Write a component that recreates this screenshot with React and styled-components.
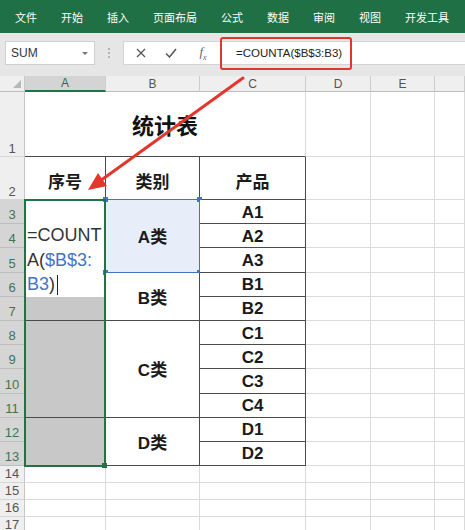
import styled, { createGlobalStyle } from 'styled-components';

const GlobalStyle = createGlobalStyle`
  html, body {
    margin: 0;
    padding: 0;
    background: #fff;
  }
  body {
    font-family: "Liberation Sans", "Noto Sans CJK SC", sans-serif;
  }
  * { box-sizing: border-box; }
`;

const DARK = '#4a4a4a';
const LIGHT = '#dadada';
const GREEN = '#217346';
const BLUE = '#4472c4';

const place = ({ $r, $c, $rs = 1, $cs = 1 }) =>
  `grid-row: ${$r} / span ${$rs}; grid-column: ${$c} / span ${$cs};`;

const Page = styled.div`
  position: relative;
  width: 465px;
  height: 530px;
  overflow: hidden;
  display: flex;
  flex-direction: column;
`;

const Ribbon = styled.div`
  height: 33px;
  flex-shrink: 0;
  background: #1f7145;
  display: flex;
  align-items: center;
  gap: 24px;
  padding-left: 15px;
  color: #fff;
  font-size: 11px;
  font-family: "Noto Sans CJK SC", sans-serif;
  white-space: nowrap;
`;

const Toolbar = styled.div`
  height: 43px;
  flex-shrink: 0;
  background: #e6e6e6;
  display: flex;
  align-items: flex-start;
  padding-top: 8px;
`;

const NameBox = styled.div`
  margin-left: 5px;
  width: 90px;
  height: 24px;
  background: #fff;
  border: 1px solid #cfcfcf;
  display: flex;
  align-items: center;
  justify-content: space-between;
  padding: 0 6px 0 5px;
  font-size: 12px;
  color: #333;
`;

const DropArrow = styled.span`
  width: 0;
  height: 0;
  border-left: 3px solid transparent;
  border-right: 3px solid transparent;
  border-top: 3px solid #777;
`;

const Grip = styled.div`
  width: 28px;
  height: 24px;
  display: flex;
  flex-direction: column;
  align-items: center;
  justify-content: center;
  gap: 2px;
  span {
    width: 2px;
    height: 2px;
    background: #b4b4b4;
  }
`;

const FormulaBox = styled.div`
  flex: 1;
  height: 24px;
  background: #fff;
  border: 1px solid #d4d4d4;
  border-right: none;
  display: flex;
  align-items: center;
  padding-left: 1px;
`;

const IconSlot = styled.div`
  width: ${(p) => p.$w}px;
  height: 22px;
  display: flex;
  align-items: center;
  justify-content: center;
  color: #555;
`;

const Fx = styled.span`
  font-family: "Liberation Serif", serif;
  font-style: italic;
  font-size: 13px;
  color: #666;
  sub {
    font-size: 8px;
  }
`;

const Callout = styled.div`
  width: 132px;
  height: 33px;
  margin: -4px 0;
  border: 2px solid #e2352c;
  border-radius: 3px;
  display: flex;
  align-items: center;
  padding-left: 14px;
  font-size: 11.5px;
  color: #222;
  white-space: nowrap;
`;

const Sheet = styled.div`
  flex: 1;
  display: grid;
  grid-template-columns: 25px 81px 94px 106px 65px 64px 30px;
  grid-template-rows: 16px 65px 43px repeat(11, 24.2px) repeat(4, 17px);
`;

const Corner = styled.div`
  ${place};
  position: relative;
  background: #efefef;
  border-right: 1px solid #c9c9c9;
  border-bottom: 1px solid #bdbdbd;
  &::after {
    content: '';
    position: absolute;
    right: 3px;
    bottom: 3px;
    border-left: 8px solid transparent;
    border-bottom: 8px solid #b8b8b8;
  }
`;

const ColHead = styled.div`
  ${place};
  background: ${(p) => (p.$sel ? '#d4d4d4' : '#efefef')};
  color: ${(p) => (p.$sel ? GREEN : '#555')};
  border-right: 1px solid #cdcdcd;
  border-bottom: ${(p) => (p.$sel ? `2px solid ${GREEN}` : '1px solid #bdbdbd')};
  display: flex;
  align-items: center;
  justify-content: center;
  font-size: 12px;
`;

const RowHead = styled.div`
  ${place};
  background: ${(p) => (p.$sel ? '#d5d5d5' : '#efefef')};
  color: ${(p) => (p.$sel ? '#3d7553' : '#555')};
  border-right: 1px solid #c6c6c6;
  border-bottom: 1px solid ${(p) => (p.$sel ? '#bebebe' : '#d6d6d6')};
  display: flex;
  align-items: flex-end;
  justify-content: center;
  padding-bottom: ${(p) => (p.$tall ? 0 : 1)}px;
  font-size: 13px;
  line-height: 15px;
`;

const Blank = styled.div`
  ${place};
  border-right: 1px solid ${LIGHT};
  border-bottom: 1px solid ${LIGHT};
`;

const Title = styled.div`
  ${place};
  border-right: 1px solid ${LIGHT};
  border-bottom: 1px solid ${DARK};
  display: flex;
  align-items: center;
  justify-content: center;
  font-family: "Noto Sans CJK SC", sans-serif;
  font-weight: 700;
  font-size: 22px;
  color: #111;
`;

const TableCell = styled.div`
  ${place};
  position: relative;
  background: ${(p) => p.$bg || '#fff'};
  border-right: 1px solid ${DARK};
  border-bottom: 1px solid ${DARK};
  display: flex;
  align-items: center;
  justify-content: center;
  font-weight: 700;
  font-size: 17px;
  color: #1a1a1a;
  padding-top: ${(p) => p.$pt || 0}px;
`;

const RefCell = styled(TableCell)`
  background: #e7eef9;
  border: 1.5px solid ${BLUE};
  margin: -1px 0 0 -1px;
`;

const Handle = styled.span`
  position: absolute;
  width: 5px;
  height: 5px;
  background: ${(p) => p.$color};
  ${(p) => (p.$top ? 'top: -3px;' : 'bottom: -3px;')}
  ${(p) => (p.$left ? 'left: -3px;' : 'right: -3px;')}
`;

const EditCell = styled.div`
  ${place};
  background: #fff;
  display: flex;
  flex-direction: column;
  justify-content: flex-end;
  padding-left: 2px;
  font-size: 18px;
  line-height: 24.5px;
  color: #333;
`;

const Line = styled.div`
  display: flex;
  align-items: center;
  white-space: nowrap;
`;

const Ref = styled.span`
  color: ${BLUE};
`;

const Caret = styled.span`
  width: 1px;
  height: 20px;
  margin-left: 2px;
  background: #222;
`;

const Frame = styled.div`
  ${place};
  position: relative;
  border: 2px solid ${GREEN};
  margin: -1px 0 -1px -1px;
  pointer-events: none;
  z-index: 2;
`;

const Overlay = styled.svg`
  position: absolute;
  left: 0;
  top: 0;
  pointer-events: none;
  z-index: 5;
`;

const tabs = ['文件', '开始', '插入', '页面布局', '公式', '数据', '审阅', '视图', '开发工具'];
const cols = ['A', 'B', 'C', 'D', 'E', 'F'];
const products = ['A1', 'A2', 'A3', 'B1', 'B2', 'C1', 'C2', 'C3', 'C4', 'D1', 'D2'];
const LAST_ROW = 17;

const App = () => {
  const rowHeads = [];
  for (let n = 1; n <= LAST_ROW; n++) {
    rowHeads.push(
      <RowHead key={'r' + n} $r={n + 1} $c={1} $sel={n >= 3 && n <= 13} $tall={n <= 2}>
        {n}
      </RowHead>
    );
  }

  const blanks = [];
  for (let n = 1; n <= LAST_ROW; n++) {
    const from = n <= 13 ? 5 : 2;
    for (let c = from; c <= 7; c++) {
      blanks.push(<Blank key={`b${n}-${c}`} $r={n + 1} $c={c} />);
    }
  }

  return (
    <Page>
      <GlobalStyle />
      <Ribbon>
        {tabs.map((t) => (
          <span key={t}>{t}</span>
        ))}
      </Ribbon>
      <Toolbar>
        <NameBox>
          SUM
          <DropArrow />
        </NameBox>
        <Grip>
          <span />
          <span />
          <span />
        </Grip>
        <FormulaBox>
          <IconSlot $w={31}>
            <svg width="10" height="10" viewBox="0 0 10 10">
              <path d="M1 1L9 9M9 1L1 9" stroke="#555" strokeWidth="1.3" />
            </svg>
          </IconSlot>
          <IconSlot $w={30}>
            <svg width="12" height="10" viewBox="0 0 12 10">
              <path d="M1 5.5L4.5 9L11 1" stroke="#555" strokeWidth="1.5" fill="none" />
            </svg>
          </IconSlot>
          <IconSlot $w={34}>
            <Fx>
              f<sub>x</sub>
            </Fx>
          </IconSlot>
          <Callout>=COUNTA($B$3:B3)</Callout>
        </FormulaBox>
      </Toolbar>

      <Sheet>
        <Corner $r={1} $c={1} />
        {cols.map((c, i) => (
          <ColHead key={c} $r={1} $c={i + 2} $sel={c === 'A'}>
            {c === 'F' ? '' : c}
          </ColHead>
        ))}
        {rowHeads}
        {blanks}

        <Title $r={2} $c={2} $cs={3}>统计表</Title>

        <TableCell $r={3} $c={2} $pt={4}>序号</TableCell>
        <TableCell $r={3} $c={3} $pt={4}>类别</TableCell>
        <TableCell $r={3} $c={4} $pt={4}>产品</TableCell>

        <EditCell $r={4} $c={2} $rs={4}>
          <Line>=COUNT</Line>
          <Line>
            A(<Ref>$B$3:</Ref>
          </Line>
          <Line>
            <Ref>B3</Ref>)<Caret />
          </Line>
        </EditCell>
        <TableCell $r={8} $c={2} $bg="#c8c8c8" />
        <TableCell $r={9} $c={2} $rs={4} $bg="#c8c8c8" />
        <TableCell $r={13} $c={2} $rs={2} $bg="#c8c8c8" />

        <RefCell $r={4} $c={3} $rs={3}>
          A类
          <Handle $color={BLUE} $top $left />
          <Handle $color={BLUE} $top />
          <Handle $color={BLUE} $left />
          <Handle $color={BLUE} />
        </RefCell>
        <TableCell $r={7} $c={3} $rs={2}>B类</TableCell>
        <TableCell $r={9} $c={3} $rs={4}>C类</TableCell>
        <TableCell $r={13} $c={3} $rs={2}>D类</TableCell>

        {products.map((p, i) => (
          <TableCell key={p} $r={i + 4} $c={4} $pt={2}>
            {p}
          </TableCell>
        ))}

        <Frame $r={4} $c={2} $rs={11}>
          <Handle $color={GREEN} />
        </Frame>
      </Sheet>

      <Overlay width="465" height="530" viewBox="0 0 465 530">
        <line x1="243" y1="78" x2="100" y2="181" stroke="#e3372d" strokeWidth="3" strokeLinecap="round" />
        <polygon points="88,190 107,186 98,173" fill="#e3372d" />
      </Overlay>
    </Page>
  );
};

export default App;
